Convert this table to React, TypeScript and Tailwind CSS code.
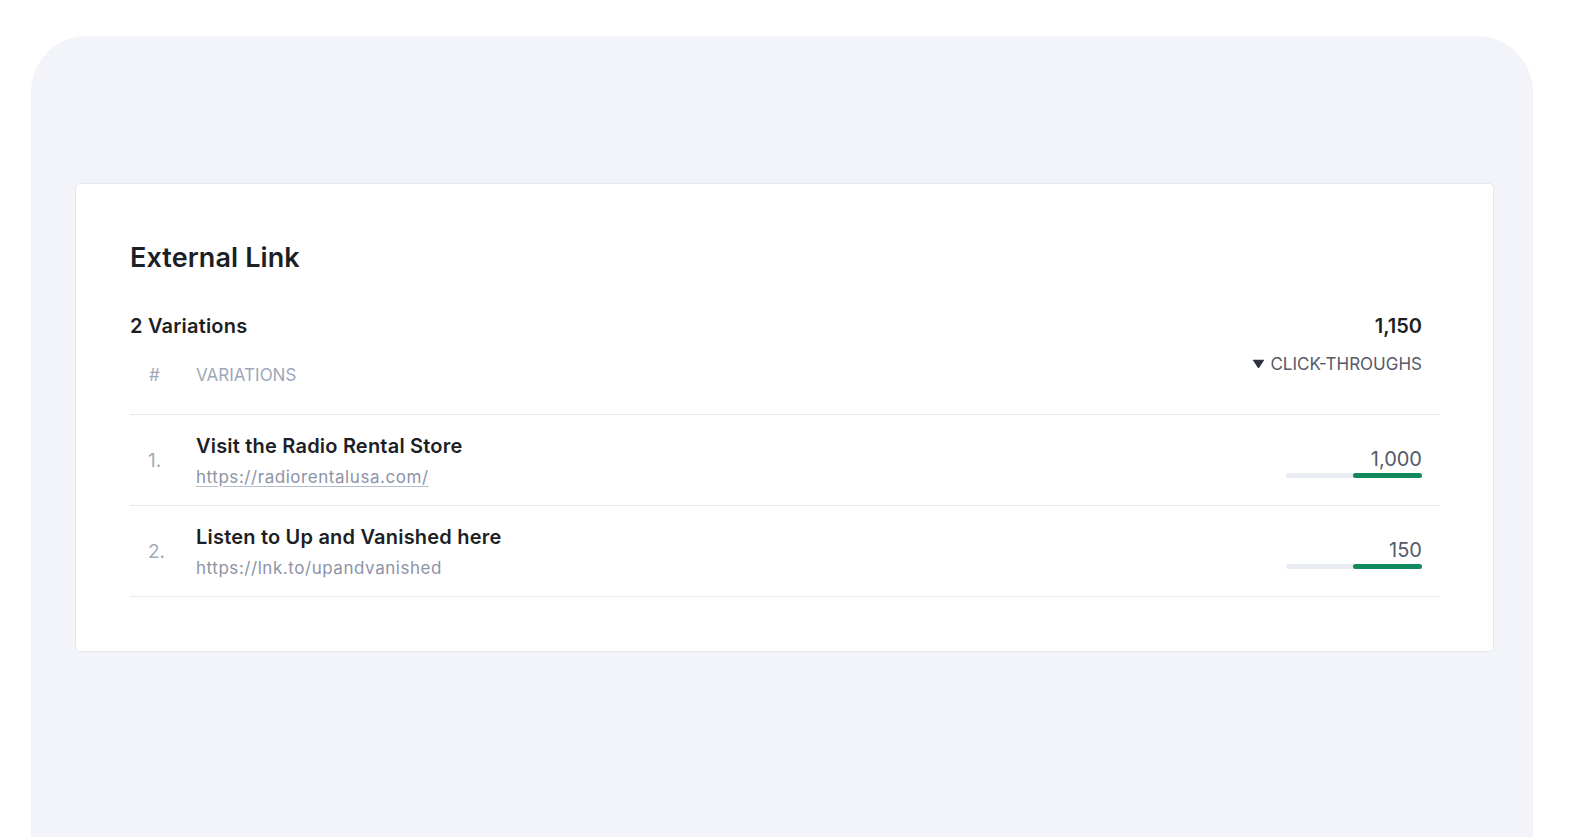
const rows = [
	{ n: 1, title: "Visit the Radio Rental Store", url: "https://radiorentalusa.com/", underline: true, value: "1,000" },
	{ n: 2, title: "Listen to Up and Vanished here", url: "https://lnk.to/upandvanished", underline: false, value: "150" },
];

export default function App() {
	return (
		<div className="min-h-screen bg-white pt-9 px-[31px] font-['Inter','Liberation_Sans',sans-serif]">
			<main className="h-[801px] w-[1502px] rounded-t-[56px] bg-[#f2f4f9] pl-11 pr-[39px] pt-[147px]">
				<section className="rounded-[5px] border border-[#e3e7ef] bg-white pl-[54px] pr-[53px] pt-[58px] pb-[54px]">
					<h1 className="text-[27px] leading-8 font-semibold text-[#1d1f26] tracking-[0.1px]">External Link</h1>

					<div className="mt-[40px] flex items-start justify-between pr-[18px]">
						<div>
							<h2 className="text-[20px] leading-6 font-semibold text-[#1d1f26] tracking-[0.2px]">2 Variations</h2>
							<div className="mt-[25px] flex items-center text-[17px] leading-6 text-[#a0a7ba] uppercase">
								<span className="w-[66px] pl-[19px]">#</span>
								<span>Variations</span>
							</div>
						</div>
						<div className="flex flex-col items-end">
							<span className="text-[20px] leading-6 font-semibold text-[#1d1f26]">1,150</span>
							<button className="mt-[14px] flex items-center gap-[5px] text-[17px] leading-6 text-[#555a6a] uppercase">
								<svg width="13" height="10" viewBox="0 0 12 9">
									<path d="M0.5 1.2 Q0.5 0.5 1.2 0.5 H10.8 Q11.5 0.5 11 1.2 L6.6 8 Q6 8.8 5.4 8 L1 1.2 Z" fill="#2d3140" />
								</svg>
								Click-throughs
							</button>
						</div>
					</div>

					<div className="mt-[27px] border-t border-[#e6e9f0]">
						{rows.map((r) => (
							<div key={r.n} className="flex h-[91px] items-center border-b border-[#e6e9f0]">
								<span className="w-[66px] pl-[18px] pt-[2px] text-[19px] text-[#a3aabb]">{r.n}.</span>
								<div className="flex-1">
									<div className="text-[20px] leading-6 font-semibold text-[#1d1f26] tracking-[0.2px]">{r.title}</div>
									<a
										href="#"
										className={
											r.underline
												? "mt-[9px] block text-[17px] leading-5 tracking-[0.55px] text-[#8c93a6] underline underline-offset-[3px] decoration-[#b7bdcc]"
												: "mt-[9px] block text-[17px] leading-5 tracking-[0.55px] text-[#8c93a6]"
										}
									>
										{r.url}
									</a>
								</div>
								<div className="mr-[18px] mt-[4px] flex w-[136px] flex-col items-end">
									<span className="text-[20px] leading-6 text-[#555a6a]">{r.value}</span>
									<div className="mt-[2px] flex h-[5px] w-full rounded-full bg-[#e8ebf2]">
										<div className="ml-auto h-[5px] w-[69px] rounded-full bg-[#138a5e]" />
									</div>
								</div>
							</div>
						))}
					</div>
				</section>
			</main>
		</div>
	);
}
